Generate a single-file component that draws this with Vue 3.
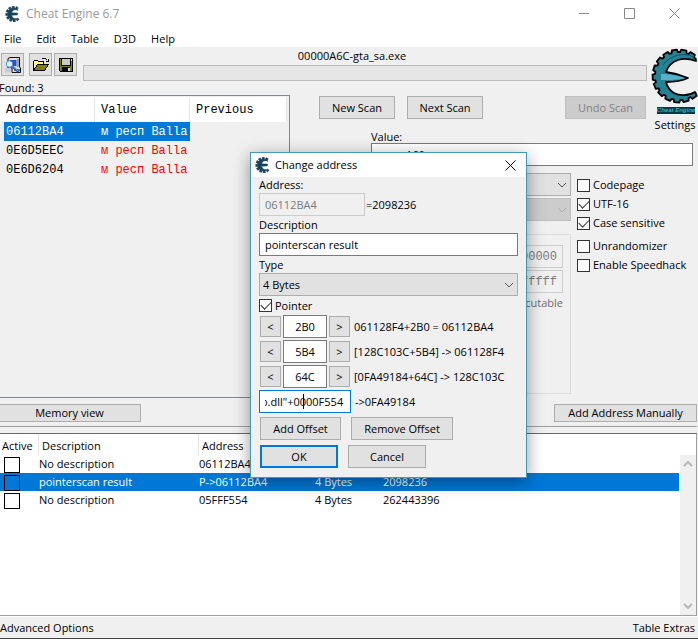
<script setup>
import { ref } from 'vue'

const menus = ['File', 'Edit', 'Table', 'D3D', 'Help']

const found = [
  { address: '06112BA4', value: 'м респ Balla', selected: true },
  { address: '0E6D5EEC', value: 'м респ Balla', selected: false },
  { address: '0E6D6204', value: 'м респ Balla', selected: false },
]

const entries = ref([
  { active: false, description: 'No description', address: '06112BA4', type: '4 Bytes', value: '', selected: false },
  { active: false, description: 'pointerscan result', address: 'P->06112BA4', type: '4 Bytes', value: '2098236', selected: true },
  { active: false, description: 'No description', address: '05FFF554', type: '4 Bytes', value: '262443396', selected: false },
])

const options = ref([
  { id: 'codepage', label: 'Codepage', on: false },
  { id: 'utf16', label: 'UTF-16', on: true },
  { id: 'case', label: 'Case sensitive', on: true },
  { id: 'unrandomizer', label: 'Unrandomizer', on: false, spaced: true },
  { id: 'speedhack', label: 'Enable Speedhack', on: false },
])

const offsets = ref([
  { value: '2B0', result: '061128F4+2B0 = 06112BA4' },
  { value: '5B4', result: '[128C103C+5B4] -> 061128F4' },
  { value: '64C', result: '[0FA49184+64C] -> 128C103C' },
])

const scanValue = ref('160')
const description = ref('pointerscan result')
const base = ref('o.dll"+0000F554')
const pointer = ref(true)

// Toothed outer edge of the C-shaped gear, walked counter-clockwise from the upper tip.
function teeth(cx, cy, inner, outer, count, open) {
  const step = (360 - 2 * open) / count
  const points = []
  const add = (deg, r) => {
    const a = (deg * Math.PI) / 180
    points.push(`${(cx + r * Math.cos(a)).toFixed(2)} ${(cy - r * Math.sin(a)).toFixed(2)}`)
  }
  for (let i = 0; i < count; i++) {
    const start = open + i * step
    add(start, inner)
    add(start + step * 0.25, inner)
    add(start + step * 0.35, outer)
    add(start + step * 0.9, outer)
  }
  add(360 - open, inner)
  return 'M' + points.join('L')
}

const gear = teeth(31, 30, 24, 26.5, 13, 46) +
  'L47 46 C41 50 31 50 26 47 C21 44 19 40 18 36 C27 36 34 35 40 32 C33 29 26 27 18 26 C20 20 24 16 30 14 C36 12 42 13 48 15Z'
const smallGear = teeth(8.5, 8, 5.9, 7.9, 9, 42) +
  'C10.5 13.4 7.5 12.4 6.6 9.2L12.5 8.9V7.1L6.6 6.8C7.5 3.8 10.5 2.8 12.7 4.4Z'
</script>

<template>
  <div class="window">
    <svg class="defs" aria-hidden="true">
      <symbol id="gear-small" viewBox="0 0 16 16">
        <path :d="smallGear" fill="#164560" stroke="#14303f" stroke-width="0.4" />
      </symbol>
    </svg>

    <header class="titlebar">
      <svg class="app-icon"><use href="#gear-small" /></svg>
      <span class="title">Cheat Engine 6.7</span>
      <div class="controls">
        <button aria-label="Minimize"><svg viewBox="0 0 11 11"><path d="M0 5.5H10" /></svg></button>
        <button aria-label="Maximize"><svg viewBox="0 0 11 11"><path d="M.5 .5H10.5V10.5H.5Z" /></svg></button>
        <button aria-label="Close"><svg viewBox="0 0 11 11"><path d="M.5 .5L10.5 10.5M10.5 .5L.5 10.5" /></svg></button>
      </div>
    </header>
    <nav class="menu">
      <a v-for="m in menus" :key="m" href="#">{{ m }}</a>
    </nav>

    <main class="scan">
      <div class="toolbar">
        <div class="tools">
          <button aria-label="Open process">
            <svg viewBox="0 0 18 18">
              <path d="M4 2.5L6 1.5H15.5V11L16.5 12V16.5H8V12H4Z" fill="#e4dfcb" stroke="#111" />
              <path d="M6 4H12.5V10H6Z" fill="#1d57c4" />
              <path d="M13 3H15V11H13Z" fill="#a59f8c" />
              <path d="M10 13H16V15H10Z" fill="#77736a" />
              <path d="M1 12H7V16.5H1Z" fill="#c3ccda" />
              <circle cx="5.5" cy="8" r="3.2" fill="#d8f3ff" stroke="#4a93cf" />
              <path d="M8 10L14.5 16" stroke="#1246d6" stroke-width="2.2" />
              <path d="M8 9.5L14 15" stroke="#bcd9ff" stroke-width="0.7" />
            </svg>
          </button>
          <button aria-label="Open file">
            <svg viewBox="0 0 18 18" shape-rendering="crispEdges">
              <path d="M1.5 14.5V5.5L2.5 4.5H5.5L6.5 5.5H11.5V8.5" fill="#ffff80" stroke="#000" />
              <path d="M1.5 14.5L5.5 8.5H16.5L12.5 14.5Z" fill="#808000" stroke="#000" />
              <path d="M9.5 3.5L10.5 2.5H13.5L15.5 4.5M16.5 2.5V5.5H13.5" fill="none" stroke="#000" />
            </svg>
          </button>
          <button aria-label="Save">
            <svg viewBox="0 0 18 18" shape-rendering="crispEdges">
              <path d="M2.5 2.5H15.5V15.5H3.5L2.5 14.5Z" fill="#808000" stroke="#000" />
              <path d="M4.5 2.5H13.5V9.5H4.5Z" fill="#c9c9c9" stroke="#000" />
              <path d="M5 11H13V15H5Z" fill="#000" />
              <path d="M11 12H13V15H11Z" fill="#ddd" />
              <path d="M14 3H15V5H14Z" fill="#ddd" />
            </svg>
          </button>
        </div>
        <div class="process">
          <span>00000A6C-gta_sa.exe</span>
          <div class="progress" role="progressbar" aria-label="Scan progress"></div>
        </div>
        <span class="found-count">Found: 3</span>
      </div>

      <section class="results">
        <table>
          <thead>
            <tr><th>Address</th><th>Value</th><th>Previous</th></tr>
          </thead>
          <tbody>
            <tr v-for="f in found" :key="f.address" :class="{ selected: f.selected }">
              <td>{{ f.address }}</td><td>{{ f.value }}</td><td></td>
            </tr>
          </tbody>
        </table>
      </section>

      <div class="scan-buttons">
        <button class="btn">New Scan</button>
        <button class="btn">Next Scan</button>
        <button class="btn undo" disabled>Undo Scan</button>
      </div>

      <button class="settings">
        <svg class="logo" viewBox="0 1 50 60">
          <path :d="gear" fill="#238294" stroke="#000" stroke-width="1.8" stroke-linejoin="round" />
          <path d="M13 28C22 28 31 30 37 32C31 34 22 34 13 34Z" fill="#55b0c8" />
          <path d="M46 11C36 6 22 9 15 19" fill="none" stroke="#145662" stroke-width="1" />
        </svg>
        <span class="brand">Cheat Engine</span>
        <span class="settings-label">Settings</span>
      </button>

      <div class="scan-form">
        <label for="scan-value">Value:</label>
        <input id="scan-value" v-model="scanValue" class="box value-box" type="text">
        <div class="form-columns">
          <div class="types">
            <div class="combo">
              <select aria-label="Scan type"><option></option></select>
              <svg viewBox="0 0 10 6"><path d="M1 1L5 5L9 1" /></svg>
            </div>
            <div class="combo off">
              <select aria-label="Value type" disabled><option></option></select>
              <svg viewBox="0 0 10 6"><path d="M1 1L5 5L9 1" /></svg>
            </div>
            <div class="memory-range">
              <input class="box mono" aria-label="Start" value="0000000000000000" disabled>
              <input class="box mono" aria-label="Stop" value="00007fffffffffff" disabled>
              <span>Executable</span>
            </div>
          </div>
          <div class="options">
            <label v-for="o in options" :key="o.id" :class="{ spaced: o.spaced }">
              <input v-model="o.on" type="checkbox">{{ o.label }}
            </label>
          </div>
        </div>
      </div>
    </main>

    <div class="midbar">
      <button class="btn slim">Memory view</button>
      <button class="btn slim">Add Address Manually</button>
    </div>

    <section class="address-list">
      <div class="list-body">
        <table>
          <thead>
            <tr><th>Active</th><th>Description</th><th>Address</th><th>Type</th><th>Value</th></tr>
          </thead>
          <tbody>
            <tr v-for="(e, i) in entries" :key="i" :class="{ selected: e.selected }">
              <td><input v-model="e.active" type="checkbox" class="square" :aria-label="'Active ' + e.address"></td>
              <td>{{ e.description }}</td><td>{{ e.address }}</td><td>{{ e.type }}</td><td>{{ e.value }}</td>
            </tr>
          </tbody>
        </table>
      </div>
      <div class="scrollbar">
        <svg viewBox="0 0 10 6"><path d="M1 5L5 1L9 5" /></svg>
        <svg viewBox="0 0 10 6"><path d="M1 1L5 5L9 1" /></svg>
      </div>
    </section>

    <footer class="status">
      <a href="#">Advanced Options</a>
      <a href="#">Table Extras</a>
    </footer>

    <form class="dialog" role="dialog" aria-label="Change address" @submit.prevent>
      <div class="dialog-title">
        <svg class="app-icon"><use href="#gear-small" /></svg>
        <span>Change address</span>
        <button type="button" aria-label="Close"><svg viewBox="0 0 11 11"><path d="M.5 .5L10.5 10.5M10.5 .5L.5 10.5" /></svg></button>
      </div>
      <div class="dialog-body">
        <label for="address">Address:</label>
        <div class="address-row">
          <input id="address" class="box" value="06112BA4" disabled><span>=2098236</span>
        </div>
        <label for="description">Description</label>
        <input id="description" v-model="description" class="box" type="text">
        <label for="type">Type</label>
        <div class="combo">
          <select id="type"><option>4 Bytes</option></select>
          <svg viewBox="0 0 10 6"><path d="M1 1L5 5L9 1" /></svg>
        </div>
        <label class="pointer"><input v-model="pointer" type="checkbox">Pointer</label>
        <div v-for="o in offsets" :key="o.result" class="offset">
          <button type="button" class="btn step">&lt;</button>
          <input v-model="o.value" class="box" aria-label="Offset">
          <button type="button" class="btn step">&gt;</button>
          <span>{{ o.result }}</span>
        </div>
        <div class="base-row">
          <div class="base-field">
            <input v-model="base" class="box" aria-label="Base address">
            <i class="caret"></i>
          </div>
          <span>-&gt;0FA49184</span>
        </div>
        <div class="actions">
          <button type="button" class="btn add">Add Offset</button>
          <button type="button" class="btn remove">Remove Offset</button>
        </div>
        <div class="actions">
          <button type="submit" class="btn ok">OK</button>
          <button type="button" class="btn cancel">Cancel</button>
        </div>
      </div>
    </form>
  </div>
</template>

<style>
body { background: #f0f0f0; }
</style>

<style scoped>
* { box-sizing: border-box; }
.window {
  position: relative;
  display: flex;
  flex-direction: column;
  min-height: 100vh;
  overflow: hidden;
  background: #f0f0f0;
  border-bottom: 1px solid #444;
  color: #000;
  font: 11px/16px "Open Sans", "Noto Sans", sans-serif;
}
.defs { position: absolute; width: 0; height: 0; }
button, input, select { font: inherit; color: inherit; margin: 0; padding: 0; border-radius: 0; }
button { border: 0; background: none; }
a { color: inherit; text-decoration: none; }
table { border-collapse: separate; border-spacing: 0; table-layout: fixed; }
th { font-weight: 400; text-align: left; }
td, th { padding: 0; white-space: nowrap; }

.titlebar { display: flex; align-items: center; height: 27px; padding-left: 5px; background: #fff; font-size: 12px; }
.app-icon { width: 16px; height: 16px; flex: none; }
.title { flex: 1; padding-left: 5px; color: #999; }
.controls { display: flex; padding-right: 1px; }
.controls button { width: 45px; height: 27px; display: grid; place-items: center; }
.controls svg, .dialog-title button svg { width: 11px; height: 11px; fill: none; stroke: #888; }
.menu { display: flex; gap: 15px; height: 20px; padding: 4px 4px 0; background: #fff; }

.scan {
  display: grid;
  grid-template-columns: 290px 1fr 52px;
  grid-template-rows: 48px 35px auto;
}
.toolbar {
  grid-column: 1 / 3;
  display: grid;
  grid-template-columns: 83px 1fr;
  grid-template-rows: 33px 15px;
}
.tools { display: flex; gap: 3px; padding: 6px 0 0 1px; }
.tools button { width: 23px; height: 23px; display: grid; place-items: center; border: 1px solid #adadad; background: #e1e1e1; }
.tools button:first-child { margin-right: 2px; }
.tools button + button { margin-right: -1px; }
.tools svg { width: 18px; height: 18px; }
.process { display: flex; flex-direction: column; align-items: center; padding: 1px 0 0; margin-right: -1px; }
.process span { padding: 0 26px 1px 0; }
.progress { align-self: stretch; height: 16px; flex: none; border: 1px solid #bcbcbc; background: #e6e6e6; }
.found-count { margin-left: -1px; line-height: 16px; }

.results {
  grid-row: 2 / 4;
  min-height: 303px;
  padding-top: 1px;
  border: 1px solid #828790;
  border-left: 0;
  font: 12px/16px "Liberation Mono", monospace;
}
.results table { width: 287px; }
.results th { height: 25px; padding-left: 6px; background: #fff; border-right: 1px solid #e5e5e5; }
.results td { height: 19px; padding-left: 6px; color: #f00; }
.results th:nth-child(-n+2) { width: 95px; }
.results td:first-child { border-left: 4px solid #f0f0f0; padding-left: 2px; color: #000; }
.results .selected td { color: #fff; }
.results .selected td:not(:last-child) { background: #0078d7; background-clip: padding-box; }

.btn { height: 23px; border: 1px solid #adadad; background: #e1e1e1; text-align: center; line-height: 21px; white-space: nowrap; }
.scan-buttons { display: flex; gap: 12px; padding: 1px 0 0 29px; }
.scan-buttons .btn { width: 76px; }
.scan-buttons .undo { width: 81px; margin-left: auto; border-color: #bfbfbf; background: #ccc; color: #838383; }

.settings {
  grid-column: 3;
  grid-row: 1 / 3;
  display: flex;
  flex-direction: column;
  align-items: center;
  justify-content: flex-start;
  padding-left: 2px;
  line-height: 16px;
}
.logo { width: 50px; height: 60px; flex: none; }
.brand { margin-left: 6px; background: #0a3a44; color: #2fb0c4; font: italic 700 6px/7px "Liberation Sans", sans-serif; white-space: nowrap; }
.settings-label { padding: 3px 0 0 4px; }

.scan-form { grid-column: 2 / 4; display: flex; flex-direction: column; padding: 0 5px 0 81px; }
.scan-form > label { line-height: 13px; }
.box { width: 100%; height: 23px; padding: 0 5px; border: 1px solid #7a7a7a; background: #fff; outline: 0; }
.box:disabled { border: 1px solid #ccc; background: #f0f0f0; color: #7b7b7b; }
.value-box { padding-left: 34px; }
.mono { font-family: "Liberation Mono", monospace; font-size: 12px; text-align: right; }
.form-columns { display: flex; gap: 6px; padding-top: 7px; }
.types { flex: 1; display: flex; flex-direction: column; gap: 2px; }
.combo { display: grid; align-items: center; }
.combo > * { grid-area: 1 / 1; }
.combo select { appearance: none; width: 100%; height: 23px; padding: 0 3px; border: 1px solid #adadad; background: #e1e1e1; }
.combo svg { justify-self: end; width: 10px; height: 6px; margin-right: 4px; fill: none; stroke: #555; pointer-events: none; }
.combo.off select { background: #ccc; border-color: #bfbfbf; opacity: 1; }
.combo.off svg { stroke: #aaa; }
.memory-range { display: flex; flex-direction: column; gap: 2px; min-height: 160px; margin-top: 11px; padding: 10px 7px; border: 1px solid #dcdcdc; color: #6d6d6d; text-align: right; }
.options { display: flex; flex-direction: column; gap: 3px; width: 116px; padding-top: 4px; }
.options label { display: flex; align-items: center; gap: 3px; white-space: nowrap; }
.options .spaced { margin-top: 4px; }
input[type="checkbox"] { appearance: none; flex: none; display: grid; place-items: center; width: 13px; height: 13px; border: 1px solid #333; background: #fff; }
input[type="checkbox"]:checked::before { content: ""; width: 9px; height: 5px; margin-top: -3px; border: solid #333; border-width: 0 0 1px 1px; transform: rotate(-45deg); }

.midbar { display: flex; justify-content: space-between; height: 29px; padding: 6px 1px 0 0; }
.midbar .btn { width: 143px; }
.midbar .btn:first-child { margin-left: -2px; }
.btn.slim { height: 18px; line-height: 16px; }

.address-list {
  position: relative;
  flex: 1;
  display: flex;
  margin-right: 1px;
  background: #fff;
  border: solid #696969;
  border-width: 1px 1px 1px 0;
  border-bottom-color: #a0a0a0;
  border-right-color: #a0a0a0;
  margin-top: 6px;
  box-shadow: 0 -6px 0 #f0f0f0, 0 -7px 0 #a0a0a0;
}
.list-body { flex: 1; }
.list-body table { width: 100%; }
.list-body th { height: 21px; padding: 3px 0 0 3px; }
.list-body th:nth-child(-n+2) { border-right: 1px solid #e5e5e5; }
.list-body th:first-child { width: 39px; padding-left: 2px; }
.list-body th:nth-child(2) { width: 160px; }
.list-body th:nth-child(3) { width: 116px; }
.list-body th:nth-child(4) { width: 68px; }
.list-body td { height: 18px; line-height: 18px; }
.list-body td:first-child { padding-left: 4px; }
.list-body .selected { background: #0078d7; color: #fff; }
input[type="checkbox"].square { width: 16px; height: 16px; margin-top: 1px; vertical-align: top; border-color: #000; background: transparent; }
.scrollbar { display: flex; flex-direction: column; justify-content: space-between; align-items: center; width: 16px; margin: 21px 0 0 1px; padding: 6px 0; background: #f0f0f0; }
.scrollbar svg { width: 10px; height: 6px; fill: none; stroke: #b8b8b8; stroke-width: 2px; }
.status { display: flex; justify-content: space-between; height: 22px; padding: 3px 3px 0 0; border-top: 1px solid #fff; }

.dialog {
  position: absolute;
  left: 250px;
  top: 152px;
  width: 277px;
  border: 1px solid #3f9bb5;
  background: #f0f0f0;
  box-shadow: 0 4px 16px rgba(0, 0, 0, .4);
}
.dialog-title { display: flex; align-items: center; gap: 4px; height: 24px; padding-left: 4px; background: #fff; }
.dialog-title span { flex: 1; }
.dialog-title button { display: grid; place-items: center; width: 31px; height: 24px; }
.dialog-title button svg { stroke: #000; }
.dialog-body { display: flex; flex-direction: column; padding: 0 8px 9px; }
.dialog-body > label { line-height: 17px; }
.dialog-body > label:first-child { line-height: 16px; }
.address-row { display: flex; align-items: center; gap: 1px; }
.address-row .box { width: 106px; }
.dialog-body > .pointer { display: flex; align-items: center; gap: 3px; height: 19px; }
.offset { display: flex; align-items: center; gap: 2px; height: 23px; margin-bottom: 2px; padding-left: 1px; white-space: nowrap; }
.offset .step { width: 21px; height: 21px; line-height: 19px; flex: none; }
.offset .box { width: 44px; flex: none; text-align: center; }
.offset span { padding-left: 2px; }
.base-row { display: flex; align-items: center; gap: 4px; }
.base-field { position: relative; width: 92px; }
.base-field .box { display: block; border-color: #0078d7; text-indent: -4px; }
.caret { position: absolute; left: 44px; top: 4px; width: 1px; height: 15px; background: #000; }
.actions { display: flex; gap: 10px; padding: 4px 0 0 1px; }
.actions + .actions { padding-top: 5px; }
.add { width: 81px; }
.remove { width: 102px; }
.ok, .cancel { width: 78px; }
.ok { border: 2px solid #0078d7; line-height: 19px; }
</style>
